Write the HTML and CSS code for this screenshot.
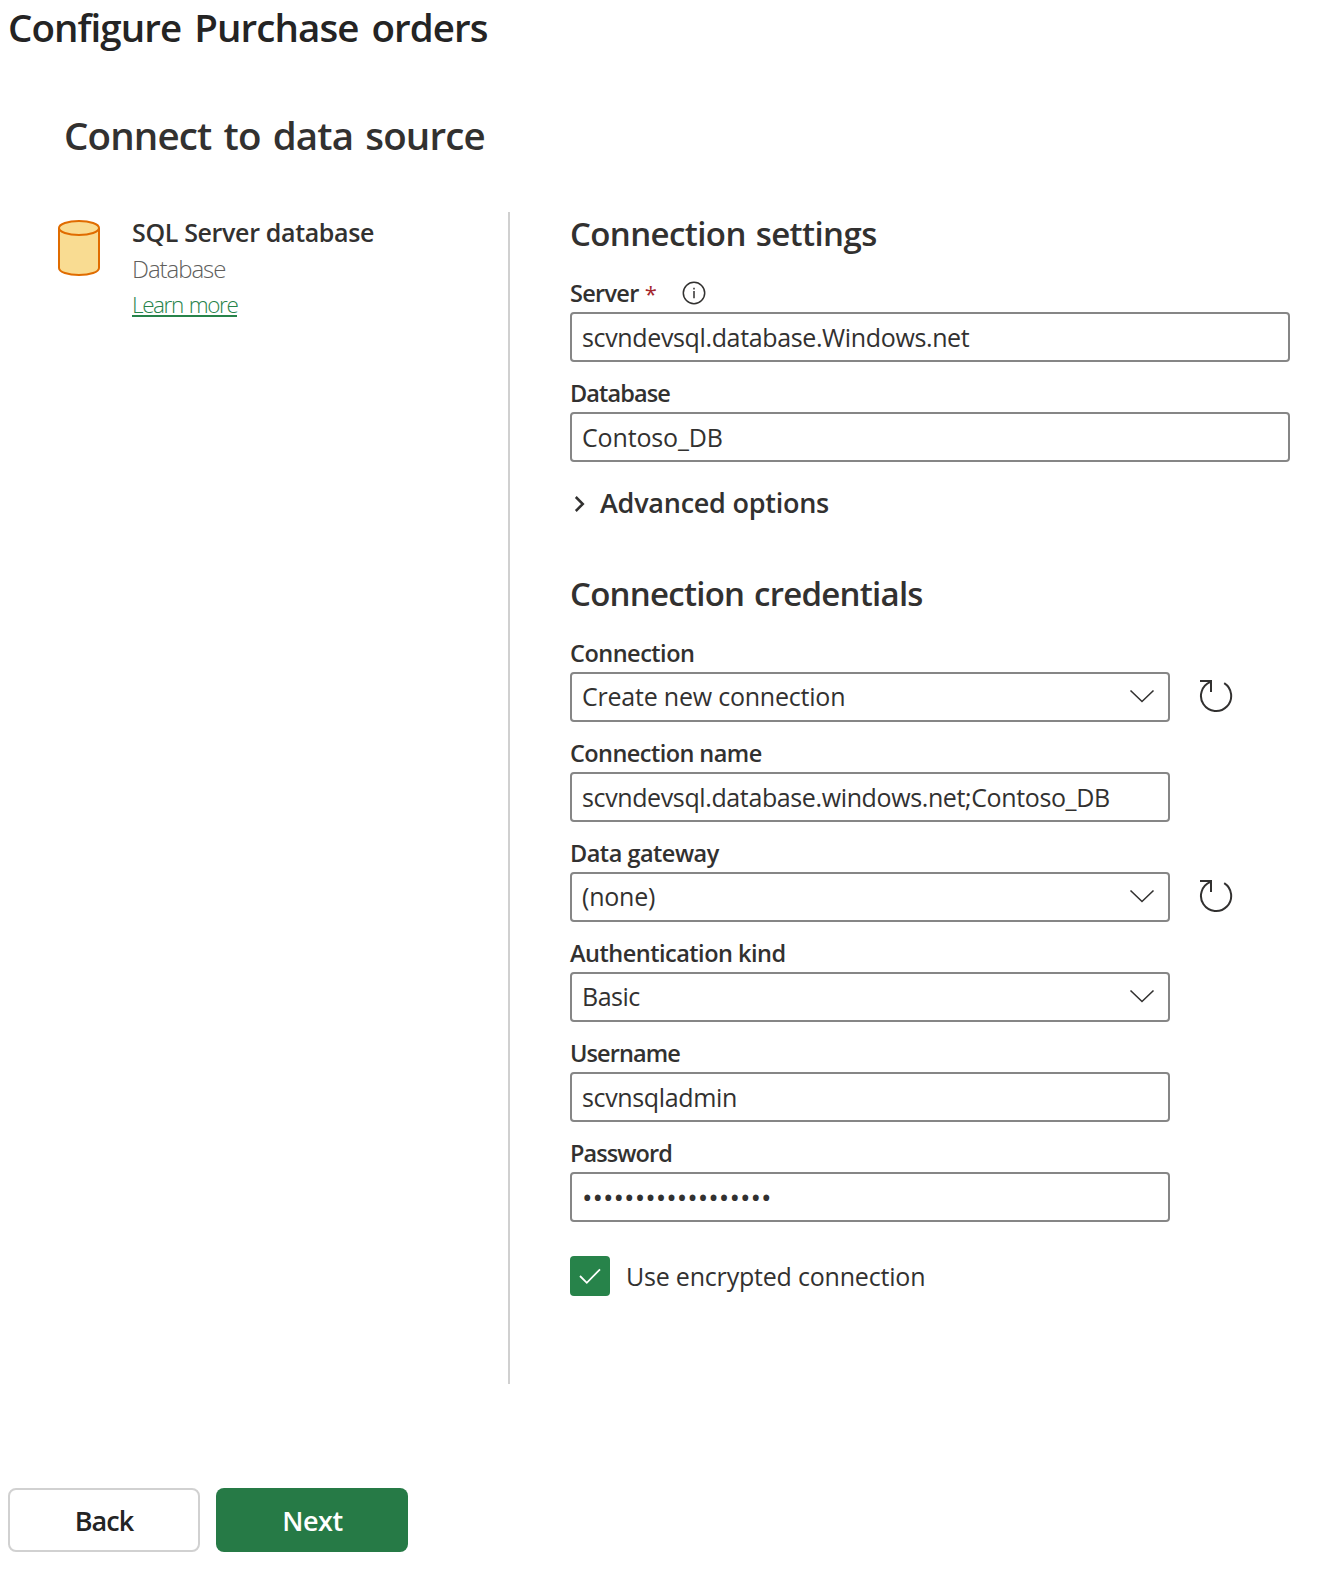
FILE: index.html
```html
<!DOCTYPE html>
<html lang="en">
<head>
<meta charset="utf-8">
<title>Configure Purchase orders</title>
<link rel="stylesheet" href="styles.css">
</head>
<body>
<svg class="defs" width="0" height="0" aria-hidden="true">
  <symbol id="chevron-down" viewBox="0 0 26 14"><path d="M1.5 1.5 13 12.5 24.5 1.5" fill="none" stroke="currentColor" stroke-width="1.6"/></symbol>
  <symbol id="refresh" viewBox="0 0 34 34"><path d="M1 2H12V13" fill="none" stroke="currentColor" stroke-width="2"/><path d="M11.5 2.9A15.1 15.1 0 1 0 25.2 4.2" fill="none" stroke="currentColor" stroke-width="2"/></symbol>
</svg>
<h1 class="page-title">Configure Purchase orders</h1>
<h2 class="step-title">Connect to data source</h2>
<main class="columns">
  <aside class="source">
    <svg class="source-icon" width="44" height="58" viewBox="0 0 44 58">
      <path d="M2 9V49C2 53 11 56 22 56S42 53 42 49V9" fill="#f9dc92" stroke="#e06c00" stroke-width="2"/>
      <ellipse cx="22" cy="9" rx="20" ry="7" fill="#f9dc92" stroke="#e06c00" stroke-width="2"/>
    </svg>
    <div class="source-text">
      <div class="source-name">SQL Server database</div>
      <div class="source-kind">Database</div>
      <a class="learn-more" href="#">Learn more</a>
    </div>
  </aside>
  <form class="settings">
    <h3 class="section-title section-title--settings">Connection settings</h3>
    <div class="fields fields--wide">
      <div class="field">
        <label class="label label--server" for="server"><span>Server</span><span class="required">*</span><svg class="info" width="24" height="24" viewBox="0 0 24 24"><circle cx="12" cy="12" r="10.7" fill="none" stroke="currentColor" stroke-width="1.5"/><path d="M12 10V17.3M12 6.7V8.5" stroke="currentColor" stroke-width="1.5"/></svg></label>
        <input class="control" id="server" value="scvndevsql.database.Windows.net">
      </div>
      <div class="field">
        <label class="label label--tight" for="database">Database</label>
        <input class="control control--db" id="database" value="Contoso_DB">
      </div>
    </div>
    <div class="advanced">
      <svg class="advanced-chevron" width="12" height="18" viewBox="0 0 12 18"><path d="M1.8 2 8.8 9 1.8 16" fill="none" stroke="currentColor" stroke-width="2.5"/></svg>
      <span>Advanced options</span>
    </div>
    <h3 class="section-title section-title--credentials">Connection credentials</h3>
    <div class="fields">
      <div class="field">
        <div class="label">Connection</div>
        <div class="row">
          <div class="control select"><span>Create new connection</span><svg class="chevron" width="26" height="14"><use href="#chevron-down"/></svg></div>
          <svg class="refresh" width="34" height="34"><use href="#refresh"/></svg>
        </div>
      </div>
      <div class="field">
        <label class="label label--name" for="name">Connection name</label>
        <input class="control control--name" id="name" value="scvndevsql.database.windows.net;Contoso_DB">
      </div>
      <div class="field">
        <div class="label">Data gateway</div>
        <div class="row">
          <div class="control select"><span>(none)</span><svg class="chevron" width="26" height="14"><use href="#chevron-down"/></svg></div>
          <svg class="refresh" width="34" height="34"><use href="#refresh"/></svg>
        </div>
      </div>
      <div class="field">
        <div class="label">Authentication kind</div>
        <div class="control select select--auth"><span>Basic</span><svg class="chevron" width="26" height="14"><use href="#chevron-down"/></svg></div>
      </div>
      <div class="field">
        <label class="label label--tight" for="user">Username</label>
        <input class="control" id="user" value="scvnsqladmin">
      </div>
      <div class="field">
        <label class="label label--tight" for="password">Password</label>
        <input class="control control--password" id="password" value="••••••••••••••••••">
      </div>
    </div>
    <div class="encrypt">
      <span class="checkbox"><svg width="24" height="20" viewBox="0 0 24 20"><path d="M2 10 8.8 16.8 22 3.3" fill="none" stroke="#fff" stroke-width="1.8"/></svg></span>
      <span>Use encrypted connection</span>
    </div>
  </form>
</main>
<footer class="actions">
  <button class="button button--back">Back</button>
  <button class="button button--next">Next</button>
</footer>
</body>
</html>
```

FILE: styles.css
```css
* { box-sizing: border-box; }

body {
  margin: 0;
  width: 1336px;
  height: 1578px;
  background: #fff;
  color: #323130;
  font-family: "Open Sans", "Noto Sans", sans-serif;
  font-size: 25px;
}

.defs { position: absolute; }

svg { display: block; flex: none; }

.page-title,
.step-title {
  margin: 0;
  font-size: 38.5px;
  font-weight: 600;
  line-height: 54px;
}

.page-title {
  padding-left: 8px;
  color: #242424;
  letter-spacing: -0.93px;
  word-spacing: 4px;
}

.step-title {
  margin-top: 54px;
  padding-left: 64px;
  letter-spacing: -0.85px;
  word-spacing: 3px;
}

.columns {
  display: flex;
  height: 1172px;
  margin-top: 50px;
}

.source {
  display: flex;
  gap: 30px;
  width: 510px;
  padding: 2px 0 0 57px;
  border-right: 2px solid #d0d0d0;
}

.source-icon { margin-top: 5px; }

.source-text { line-height: 36px; }

.source-name {
  padding-left: 1px;
  font-weight: 600;
  letter-spacing: -0.34px;
}

.source-kind {
  padding: 1px 0 0 1px;
  color: #605e5c;
  font-weight: 300;
  font-size: 24px;
  letter-spacing: -1.05px;
}

.learn-more {
  display: block;
  width: 105px;
  height: 30px;
  margin-left: 1px;
  border-bottom: 2px solid #27834a;
  color: #27834a;
  font-size: 22.5px;
  font-weight: 300;
  letter-spacing: -1.4px;
  text-decoration: none;
  white-space: nowrap;
  word-spacing: 1.5px;
}

.settings {
  width: 780px;
  padding-left: 60px;
}

.section-title {
  margin: 0 0 19px;
  padding-top: 1px;
  font-size: 33px;
  font-weight: 600;
  line-height: 42px;
}

.section-title--settings {
  letter-spacing: -0.6px;
  word-spacing: 2px;
}

.section-title--credentials {
  margin-top: 52px;
  letter-spacing: -0.75px;
  word-spacing: 2px;
}

.fields {
  display: flex;
  flex-direction: column;
  gap: 12px;
  width: 600px;
}

.fields--wide { width: 720px; }

.label {
  display: flex;
  align-items: center;
  height: 38px;
  font-size: 23.5px;
  font-weight: 600;
  letter-spacing: -0.5px;
}

.label--server { letter-spacing: -0.7px; }
.label--tight { letter-spacing: -0.9px; }
.label--name { letter-spacing: -0.56px; }

.required {
  margin-left: 6px;
  color: #a4262c;
  font-size: 22px;
  font-weight: 400;
}

.info { margin-left: 25.5px; }

.control {
  display: block;
  width: 100%;
  height: 50px;
  padding: 0 10px;
  border: 2px solid #868686;
  border-radius: 4px;
  outline: 0;
  background: #fff;
  color: inherit;
  font: inherit;
  letter-spacing: -0.36px;
}

.control--db { letter-spacing: -0.15px; }
.control--name { letter-spacing: -0.38px; }

.control--password {
  font-size: 28px;
  letter-spacing: 0;
}

.row {
  display: flex;
  align-items: center;
  gap: 29px;
}

.select {
  display: flex;
  flex: none;
  align-items: center;
  justify-content: space-between;
  padding: 0 13px 2px 10px;
  letter-spacing: -0.22px;
}

.select--auth { letter-spacing: -0.5px; }

.refresh { margin-bottom: 2px; }

.advanced {
  display: flex;
  align-items: center;
  gap: 14px;
  height: 36px;
  margin-top: 22px;
  padding-left: 4px;
  font-size: 27px;
  font-weight: 600;
  letter-spacing: -0.25px;
}

.advanced-chevron { margin-top: 3px; }

.encrypt {
  display: flex;
  align-items: center;
  gap: 16px;
  margin-top: 34px;
  height: 40px;
  letter-spacing: -0.2px;
}

.checkbox {
  display: flex;
  align-items: center;
  justify-content: center;
  width: 40px;
  height: 40px;
  border-radius: 4px;
  background: #27834a;
}

.actions {
  display: flex;
  gap: 16px;
  margin-top: 104px;
  padding-left: 8px;
}

.button {
  width: 192px;
  height: 64px;
  padding: 0;
  border: 0;
  border-radius: 8px;
  font-family: inherit;
  font-size: 27px;
  font-weight: 600;
}

.button--back {
  border: 2px solid #d1d1d1;
  background: #fff;
  color: #242424;
  letter-spacing: -0.9px;
}

.button--next {
  padding-left: 1px;
  background: #267a46;
  color: #fff;
  letter-spacing: -0.4px;
}
```
